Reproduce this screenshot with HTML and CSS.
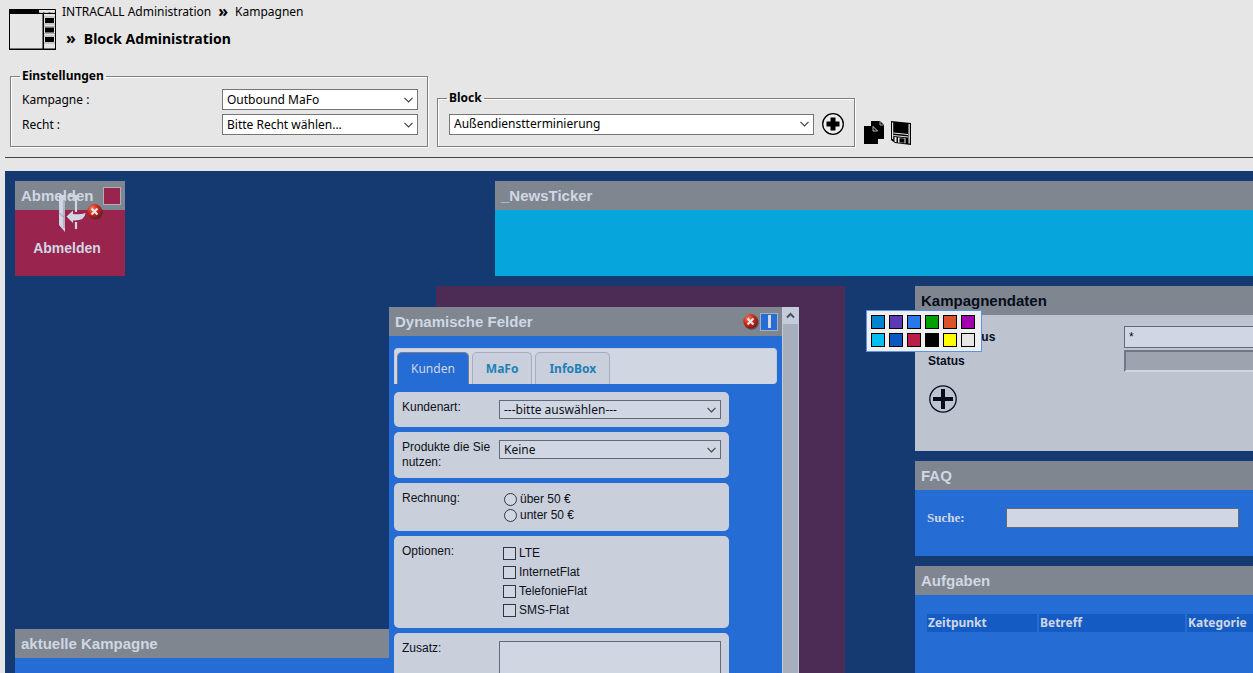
FILE: index.html
```
<!DOCTYPE html>
<html lang="de">
<head>
<meta charset="utf-8">
<title>Block Administration</title>
<link rel="stylesheet" href="styles.css">
</head>
<body>
<header class="head">
  <svg class="logo" width="47" height="41" viewBox="0 0 47 41" aria-hidden="true">
    <path d="M.5.5h46v40H.5z" fill="none" stroke="#000"/>
    <path d="M0 0h30v5H0zM30 3.500h17V5H30zM33.500 4H35v37h-1.500zM0 39.500h47V41H0z"/>
    <path d="M30.500 1.200h3.500v2.500h-3.500zM35.500 1.200h4v2.500h-4zM41.500 1.200h4v2.500h-4z" fill="#e6e6e6"/>
    <path d="M36 9h9v5h-9zM36 18.500h9v5h-9zM36 28h9v5h-9z"/>
    <path d="M35 15h11M35 24.500h11M35 34h11M35 8h11M35 17.500h11M35 27h11" stroke="#aaa"/>
  </svg>
  <div>
    <nav class="crumbs"><span>INTRACALL Administration</span><b class="sep">»</b><span>Kampagnen</span></nav>
    <h1 class="title"><span class="sep">»</span>Block Administration</h1>
  </div>
</header>

<form class="settings">
  <fieldset class="group">
    <legend>Einstellungen</legend>
    <div class="field"><label for="kampagne">Kampagne :</label><select id="kampagne"><option>Outbound MaFo</option></select></div>
    <div class="field"><label for="recht">Recht :</label><select id="recht"><option>Bitte Recht wählen...</option></select></div>
  </fieldset>
  <fieldset class="group group-block">
    <legend>Block</legend>
    <div class="field">
      <select id="block" aria-label="Block"><option>Außendienstterminierung</option></select>
      <button type="button" class="icon-btn" aria-label="Block hinzufügen">
        <svg width="22" height="22" viewBox="0 0 22 22"><circle cx="11" cy="11" r="10.300" fill="#eee" stroke="#000" stroke-width="1.300"/><path d="M8.500 4.500h5v4h4v5h-4v4h-5v-4h-4v-5h4z"/></svg>
      </button>
    </div>
  </fieldset>
  <div class="tools">
    <button type="button" class="icon-btn" aria-label="Kopieren">
      <svg width="20" height="24" viewBox="0 0 20 24"><path d="M7 0h9l4 4v14h-6V10L9 5H7z"/><path d="M0 5h9l5 5v13H0z"/><path d="M9 5.500v4.500h4.500M9 5.500l4.500 4.500M16 .5V4h3.500" fill="none" stroke="#ddd" stroke-width=".8"/></svg>
    </button>
    <button type="button" class="icon-btn" aria-label="Speichern">
      <svg width="20" height="24" viewBox="0 0 20 24"><path d="M0 0l20 2v22L4 22 0 19z"/><path d="M1 1.500l1.200.1v17L1 17.800zM17.500 3h1.300v19.500h-1.300zM2.500 11.500l14.500 1.500v1l-14.500-1.500zM2.500 14l14.500 1.500v1l-14.500-1.500z" fill="#e6e6e6"/><path d="M3.500 16l2 .2v5l-2-.4zM7 16.500l7.500.8v5L7 21.500z" fill="#eee"/><path d="M8.500 17.200l5 .3v4.300l-5-.3z"/></svg>
    </button>
  </div>
</form>

<main class="canvas">
  <section class="block b-logout">
    <h2 class="bar">Abmelden</h2>
    <button type="button" class="logout">Abmelden</button>
    <svg class="door" width="30" height="42" viewBox="0 0 30 42" aria-hidden="true">
      <path d="M1 2l6 3v34l-6-7z"/><path d="M1 3h6M10 3h9M18 2v17M18 29v7" fill="none" stroke="#d0d7e3" stroke-width="2.200"/>
      <path d="M8.500 23.500L15 17.500V21Q22 22 27.500 20 27 28 15 27.500V30z"/><path d="M1.500 20l4 4M6 7v28" stroke="#8d7c98" fill="none" stroke-width=".8"/>
    </svg>
    <svg class="close" width="16" height="16" viewBox="0 0 16 16"><use href="#closeIcon"/></svg>
    <button type="button" class="swatch-btn" aria-label="Farbe"></button>
  </section>

  <section class="block b-news"><h2 class="bar">_NewsTicker</h2></section>
  <section class="block b-back"></section>
  <section class="block b-campaign"><h2 class="bar">aktuelle Kampagne</h2></section>

  <section class="block b-dyn">
    <div class="dyn-main">
      <div class="bar"><h2>Dynamische Felder</h2>
        <svg width="16" height="16" viewBox="0 0 16 16" aria-label="Schließen">
          <defs><radialGradient id="red" cx=".35" cy=".3" r=".75"><stop offset="0" stop-color="#ee8068"/><stop offset=".5" stop-color="#cf2815"/><stop offset="1" stop-color="#7c1714"/></radialGradient></defs>
          <g id="closeIcon"><circle cx="8.500" cy="8.500" r="7.300" fill="#3b2c38" opacity=".6"/><circle cx="7.500" cy="7.300" r="7.200" fill="url(#red)"/><path d="M4.500 4.500l6 6M10.500 4.500l-6 6" stroke="#e6e6ee" stroke-width="2.200"/></g>
        </svg>
        <button type="button" class="color-btn" aria-label="Farbe"></button>
      </div>
      <div class="dyn-body">
        <div class="tabs" role="tablist">
          <button type="button" class="tab active" role="tab">Kunden</button>
          <button type="button" class="tab" role="tab">MaFo</button>
          <button type="button" class="tab" role="tab">InfoBox</button>
        </div>
        <div class="card c-one"><label for="art">Kundenart:</label><select id="art"><option>---bitte auswählen---</option></select></div>
        <div class="card c-two"><label for="prod">Produkte die Sie nutzen:</label><select id="prod"><option>Keine</option></select></div>
        <div class="card c-two"><span>Rechnung:</span>
          <div class="radios">
            <label><input type="radio" name="r">über 50 €</label>
            <label><input type="radio" name="r">unter 50 €</label>
          </div>
        </div>
        <div class="card"><span>Optionen:</span>
          <div class="checks">
            <label><input type="checkbox">LTE</label>
            <label><input type="checkbox">InternetFlat</label>
            <label><input type="checkbox">TelefonieFlat</label>
            <label><input type="checkbox">SMS-Flat</label>
          </div>
        </div>
        <div class="card"><label for="zusatz">Zusatz:</label><textarea id="zusatz"></textarea></div>
      </div>
    </div>
    <div class="scroll"><div class="scroll-up"><svg width="9" height="7" viewBox="0 0 9 7"><path d="M1 5.500l3.500-3.500L8 5.500" fill="none" stroke="#4a525e" stroke-width="2"/></svg></div></div>
  </section>

  <section class="block b-data">
    <h2 class="bar">Kampagnendaten</h2>
    <div class="data-body">
      <div class="data-row"><label for="zs">Anrufstatus</label><input id="zs" class="star" type="text" value="*"></div>
      <div class="data-row"><label for="st">Status</label><input id="st" class="off" type="text" disabled></div>
      <button type="button" class="icon-btn add" aria-label="Hinzufügen">
        <svg width="28" height="28" viewBox="0 0 28 28"><circle cx="14" cy="14" r="13.200" fill="none" stroke="#050d1c" stroke-width="1.300"/><path d="M12 4h4v8h8v4h-8v8h-4v-8H4v-4h8z" fill="#050d1c"/></svg>
      </button>
    </div>
  </section>

  <section class="block b-faq">
    <h2 class="bar">FAQ</h2>
    <div class="faq-row"><label for="suche">Suche:</label><input id="suche" type="text"></div>
  </section>

  <section class="block b-tasks">
    <h2 class="bar">Aufgaben</h2>
    <table class="tasks"><thead><tr><th class="t-time">Zeitpunkt</th><th class="t-subject">Betreff</th><th class="t-cat">Kategorie</th></tr></thead></table>
  </section>

  <div class="palette" aria-label="Farbauswahl">
    <button type="button" class="k1" aria-label="Blau"></button><button type="button" class="k2" aria-label="Violett"></button><button type="button" class="k3" aria-label="Hellblau"></button><button type="button" class="k4" aria-label="Grün"></button><button type="button" class="k5" aria-label="Orange"></button><button type="button" class="k6" aria-label="Magenta"></button><button type="button" class="k7" aria-label="Cyan"></button><button type="button" class="k8" aria-label="Dunkelblau"></button><button type="button" class="k9" aria-label="Rot"></button><button type="button" class="k10" aria-label="Schwarz"></button><button type="button" class="k11" aria-label="Gelb"></button><button type="button" class="k12" aria-label="Grau"></button>
  </div>
</main>
</body>
</html>
```
FILE: styles.css
```
* { box-sizing: border-box; }
body {
  margin: 0;
  height: 100vh;
  overflow: hidden;
  display: flex;
  flex-direction: column;
  background: #e6e6e6;
  color: #000;
  font: 12px/16px "Noto Sans", sans-serif;
}
h1, h2 { margin: 0; font-size: inherit; }
button, input, select, textarea { font: inherit; color: inherit; margin: 0; border-radius: 0; }

.head { display: flex; gap: 6px; padding: 4px 9px 0; height: 60px; }
.logo { margin-top: 5px; }
.crumbs { display: flex; gap: 7px; }
.crumbs .sep { font-size: 16px; line-height: 14px; }
.title { display: flex; gap: 8px; padding: 9px 0 0 4px; font-size: 14px; line-height: 20px; }
.title .sep { font-size: 16px; line-height: 18px; }

.settings {
  display: flex;
  align-items: flex-end;
  gap: 9px;
  margin-left: 5px;
  padding: 8px 0 10px 5px;
  border-bottom: 1px solid #444;
}
.group {
  width: 418px;
  margin: 0;
  padding: 5px 9px 11px 11px;
  border: 1px solid #7f7f7f;
  box-shadow: 1px 1px 0 #fff, inset 1px 1px 0 #fff;
}
.group legend { margin-left: -2px; padding: 0 2px; font-weight: bold; }
.group-block { padding-right: 10px; }
.field { display: flex; align-items: center; gap: 8px; }
.field + .field { margin-top: 4px; }
.group-block { padding-top: 7px; }
.field label { flex: 1; }
select {
  appearance: none;
  height: 21px;
  padding: 0 4px;
  border: 1px solid #767676;
  background: #fff url("data:image/svg+xml,%3Csvg xmlns='http://www.w3.org/2000/svg' width='9' height='6'%3E%3Cpath d='M.5 .8l4 4 4-4' fill='none' stroke='%23444' stroke-width='1.2'/%3E%3C/svg%3E") no-repeat right 4px center;
}
.field select { width: 196px; }
.group-block .field select { flex: 1; }
.icon-btn { display: flex; padding: 0; border: 0; background: none; }
.tools { display: flex; gap: 7px; padding-bottom: 2px; }

.canvas {
  position: relative;
  flex: 1;
  margin: 13px 0 0 5px;
  overflow: hidden;
  background: #143a71;
  color: #d0d7e3;
}
.block { position: absolute; background: #256cd4; }
.bar {
  display: flex;
  align-items: center;
  height: 29px;
  padding: 0 6px;
  background: #7f8690;
  font: bold 15px/29px "Liberation Sans", Arial, sans-serif;
}
.b-logout { left: 10px; top: 10px; width: 110px; height: 95px; background: #99244e; }
.logout {
  width: 100%;
  padding: 30px 6px 20px 0;
  border: 0;
  background: none;
  font: bold 14px/16px "Liberation Sans", Arial, sans-serif;
}
.door { position: absolute; left: 43px; top: 12px; fill: #d0d7e3; }
.close { position: absolute; left: 72px; top: 23px; }
.swatch-btn { position: absolute; left: 88px; top: 6px; width: 18px; height: 18px; border: 1px solid #a9b0bc; background: #99244e; }
.b-news { left: 490px; right: 0; top: 10px; height: 95px; background: #06a5db; }
.b-back { left: 431px; top: 115px; bottom: 0; width: 409px; background: #4c2c55; }
.b-campaign { left: 10px; top: 458px; bottom: 0; width: 400px; }

.b-dyn { left: 384px; top: 136px; bottom: 0; width: 410px; display: flex; overflow: hidden; color: #0d1119; }
.dyn-main { flex: 1; }
.dyn-main .bar { gap: 1px; padding-right: 4px; color: #d0d7e3; }
.bar h2 { flex: 1; }
.color-btn { width: 18px; height: 18px; padding: 0; border: 1px solid #a9b0bc; background: linear-gradient(#d0d7e3, #d0d7e3) center / 3px 13px no-repeat #256cd4; }
.scroll { width: 17px; background: #a8afbc; border: solid #c4ccd9; border-width: 0 1px; }
.scroll-up { display: flex; align-items: center; justify-content: center; height: 17px; background: #c4ccd9; }
.dyn-body { display: flex; flex-direction: column; gap: 5px; padding: 12px 5px 0; }
.tabs {
  display: flex;
  gap: 3px;
  height: 36px;
  margin-bottom: 3px;
  padding: 3px 2px 0;
  border: 1px solid #c3cbd9;
  border-bottom: 0;
  border-radius: 4px;
  border-bottom-left-radius: 0;
  background: #d0d7e3;
}
.tab {
  padding: 0 13px;
  border: 1px solid #a6aebb;
  border-bottom: 0;
  border-radius: 5px 5px 0 0;
  background: #c9cfdb;
  color: #1e80b8;
  font: bold 12px/20px "Noto Sans", sans-serif;
}
.tab.active { background: #256cd4; border-color: #757f91; color: #d0d7e3; font-weight: normal; }
.card {
  display: flex;
  align-items: flex-start;
  width: 335px;
  padding: 8px;
  border-radius: 5px;
  background: #c9cfdb;
  font: 12px/15px "Liberation Sans", Arial, sans-serif;
}
.card > :first-child { width: 97px; padding-right: 4px; }
.c-one { min-height: 35px; }
.c-two { min-height: 46px; }
.card select { width: 222px; height: 19px; border-color: #626a78; background-color: #d0d7e3; font: 12px/16px "Noto Sans", sans-serif; }
.card textarea { width: 222px; height: 60px; border: 1px solid #626a78; background: #d0d7e3; resize: none; }
.radios label, .checks label { display: flex; align-items: center; }
.radios { padding-left: 5px; }
.radios label { height: 16px; gap: 3px; }
.checks { padding-left: 4px; }
.checks label { height: 19px; gap: 3px; }
.card input { appearance: none; width: 13px; height: 13px; border: 1px solid #2f3744; background: #d0d7e3; }
.card input[type="radio"] { border-radius: 50%; }

.b-data { left: 910px; right: 0; top: 115px; height: 165px; background: #bdc4d0; color: #050d1c; }
.data-body { padding: 10px 0 0 13px; font: bold 12px/16px "Liberation Sans", Arial, sans-serif; }
.data-row { display: flex; align-items: center; height: 24px; overflow: hidden; }
.data-row label { flex: none; width: 196px; }
.data-row input { flex: none; width: 160px; height: 22px; padding: 0 4px; }
.star { border: 1px solid #626a78; background: #d0d7e3; font-weight: normal; }
.off { border: 2px solid; border-color: #717885 #d0d7e3 #d0d7e3 #717885; background: #9da4b0; }
.add { margin: 12px 0 0 1px; }

.b-faq { left: 910px; right: 0; top: 290px; height: 95px; }
.faq-row { display: flex; align-items: center; padding: 18px 14px 0 12px; }
.faq-row label { width: 79px; font: bold 13px/16px "Liberation Serif", serif; }
.faq-row input { flex: 1; min-width: 0; height: 20px; border: 1px solid #626a78; background: #d0d7e3; }

.b-tasks { left: 910px; right: 0; top: 395px; bottom: 0; overflow: hidden; }
.tasks { margin: 17px 0 0 10px; width: 420px; table-layout: fixed; border-spacing: 2px; }
.tasks th { height: 18px; padding: 0 1px; background: #155bc4; text-align: left; font-size: 12px; line-height: 18px; }
.t-time { width: 110px; }
.t-subject { width: 146px; }

.palette {
  position: absolute;
  left: 861px;
  top: 139px;
  display: grid;
  grid-template-columns: repeat(6, 14px);
  gap: 4px;
  padding: 4px 6px 4px 4px;
  border: 1px solid #5b93ea;
  background: #efefef;
}
.palette button { height: 14px; padding: 0; border: 1px solid #000; }
.k1 { background: #0084d0; } .k2 { background: #5b38b4; } .k3 { background: #2878ec; }
.k4 { background: #00a000; } .k5 { background: #dc5229; } .k6 { background: #a200ad; }
.k7 { background: #00bff0; } .k8 { background: #0a57c2; } .k9 { background: #b91d48; }
.k10 { background: #000; } .k11 { background: #ff0; } .k12 { background: #e6e6e6; }
```
